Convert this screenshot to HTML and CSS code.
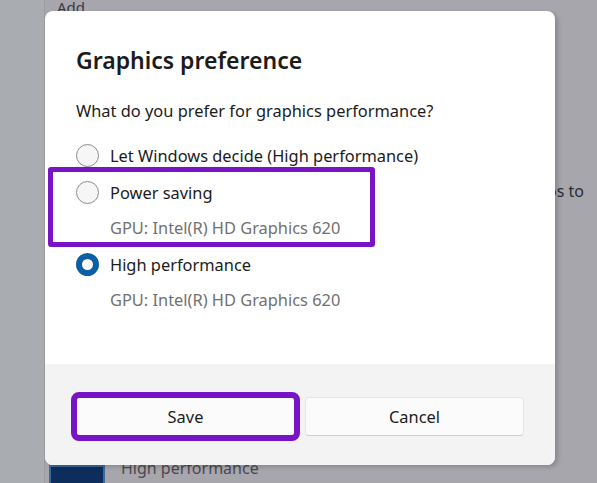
FILE: index.html
```html
<!DOCTYPE html>
<html lang="en">
<head>
    <meta charset="UTF-8">
    <meta name="viewport" content="width=device-width, initial-scale=1.0">
    <title>Graphics preference</title>
    <link rel="stylesheet" href="styles.css">
</head>
<body>
    <div class="backdrop">
        <div class="side"></div>
        <div class="page">
            <p class="bg-top">Add</p>
            <p class="bg-line">Choose preferences for apps to</p>
            <div class="bg-row">
                <span class="bg-icon"></span>
                <span class="bg-text">High performance</span>
            </div>
        </div>
    </div>

    <div class="dialog">
        <div class="dialog-body">
            <h1>Graphics preference</h1>
            <p class="question">What do you prefer for graphics performance?</p>

            <div class="option">
                <span class="radio"></span>
                <div class="option-text">
                    <p class="label">Let Windows decide (High performance)</p>
                </div>
            </div>
            <div class="option marked">
                <span class="radio"></span>
                <div class="option-text">
                    <p class="label">Power saving</p>
                    <p class="gpu">GPU: Intel(R) HD Graphics 620</p>
                </div>
            </div>
            <div class="option">
                <span class="radio checked"></span>
                <div class="option-text">
                    <p class="label">High performance</p>
                    <p class="gpu">GPU: Intel(R) HD Graphics 620</p>
                </div>
            </div>
        </div>
        <div class="dialog-footer">
            <button class="btn marked-btn">Save</button>
            <button class="btn">Cancel</button>
        </div>
    </div>
</body>
</html>
```

FILE: styles.css
```css
*, *::before, *::after {
    box-sizing: border-box;
    margin: 0;
    padding: 0;
}
body {
    font-family: "Noto Sans", "Open Sans", sans-serif;
    background-color: #a8a6ad;
    color: #1b1b1b;
    width: 597px;
    height: 483px;
    overflow: hidden;
    position: relative;
}
.backdrop {
    display: flex;
    height: 483px;
}
.side {
    width: 45px;
    background: #a9acb0;
    border-right: 1px solid #9b9ca2;
}
.page {
    flex: 1;
    display: flex;
    flex-direction: column;
}
.bg-top {
    font-size: 15px;
    line-height: 20px;
    color: #3b3a40;
    margin: -3px 0 0 12px;
}
.bg-line {
    font-size: 16px;
    color: #2d2c32;
    text-align: right;
    padding-right: 13px;
    margin-top: 163px;
}
.bg-row {
    margin-top: auto;
    display: flex;
    align-items: flex-end;
    gap: 16px;
    padding-left: 4px;
}
.bg-icon {
    width: 56px;
    height: 18px;
    background: #0d2d5c;
    border: 2px solid #3d6a9a;
    border-bottom: 0;
}
.bg-text {
    font-size: 16px;
    color: #4a4950;
    line-height: 18px;
    margin-bottom: 6px;
}
.dialog {
    position: absolute;
    left: 45px;
    top: 11px;
    width: 510px;
    height: 454px;
    background: #fff;
    border-radius: 8px;
    box-shadow: 3px 2px 4px rgba(0,0,0,0.18);
    display: flex;
    flex-direction: column;
}
.dialog-body {
    flex: 1;
    padding: 31px 31px 0;
}
.dialog-body h1 {
    font-size: 23px;
    font-weight: 600;
    line-height: 36px;
    margin-bottom: 21px;
}
.question {
    font-size: 16.4px;
    line-height: 24px;
    margin-bottom: 21px;
}
.option {
    display: flex;
    gap: 11px;
    position: relative;
}
.option + .option {
    margin-top: 14px;
}
.radio {
    width: 23px;
    height: 23px;
    border-radius: 50%;
    border: 1px solid #8d8d8d;
    background: #f6f6f6;
    flex-shrink: 0;
}
.radio.checked {
    border: 6px solid #0b5fa5;
    background: #fff;
}
.label {
    font-size: 16.4px;
    line-height: 23px;
}
.gpu {
    font-size: 16.4px;
    line-height: 23px;
    color: #717171;
    margin-top: 12px;
}
.option.marked::after {
    content: "";
    position: absolute;
    left: -28px;
    top: -14px;
    width: 327px;
    height: 80px;
    border: 5px solid #7813c6;
    border-radius: 3px;
}
.dialog-footer {
    height: 101px;
    background: #f3f3f3;
    border-radius: 0 0 8px 8px;
    display: flex;
    gap: 10px;
    padding: 33px 31px 0;
}
.btn {
    flex: 1;
    height: 39px;
    font-family: inherit;
    font-size: 16.4px;
    color: #1b1b1b;
    background: #fbfbfb;
    border: 1px solid #e6e6e6;
    border-bottom-color: #cfcfcf;
    border-radius: 4px;
}
.marked-btn {
    outline: 6px solid #7813c6;
    outline-offset: -1px;
    border-radius: 3px;
}
```
